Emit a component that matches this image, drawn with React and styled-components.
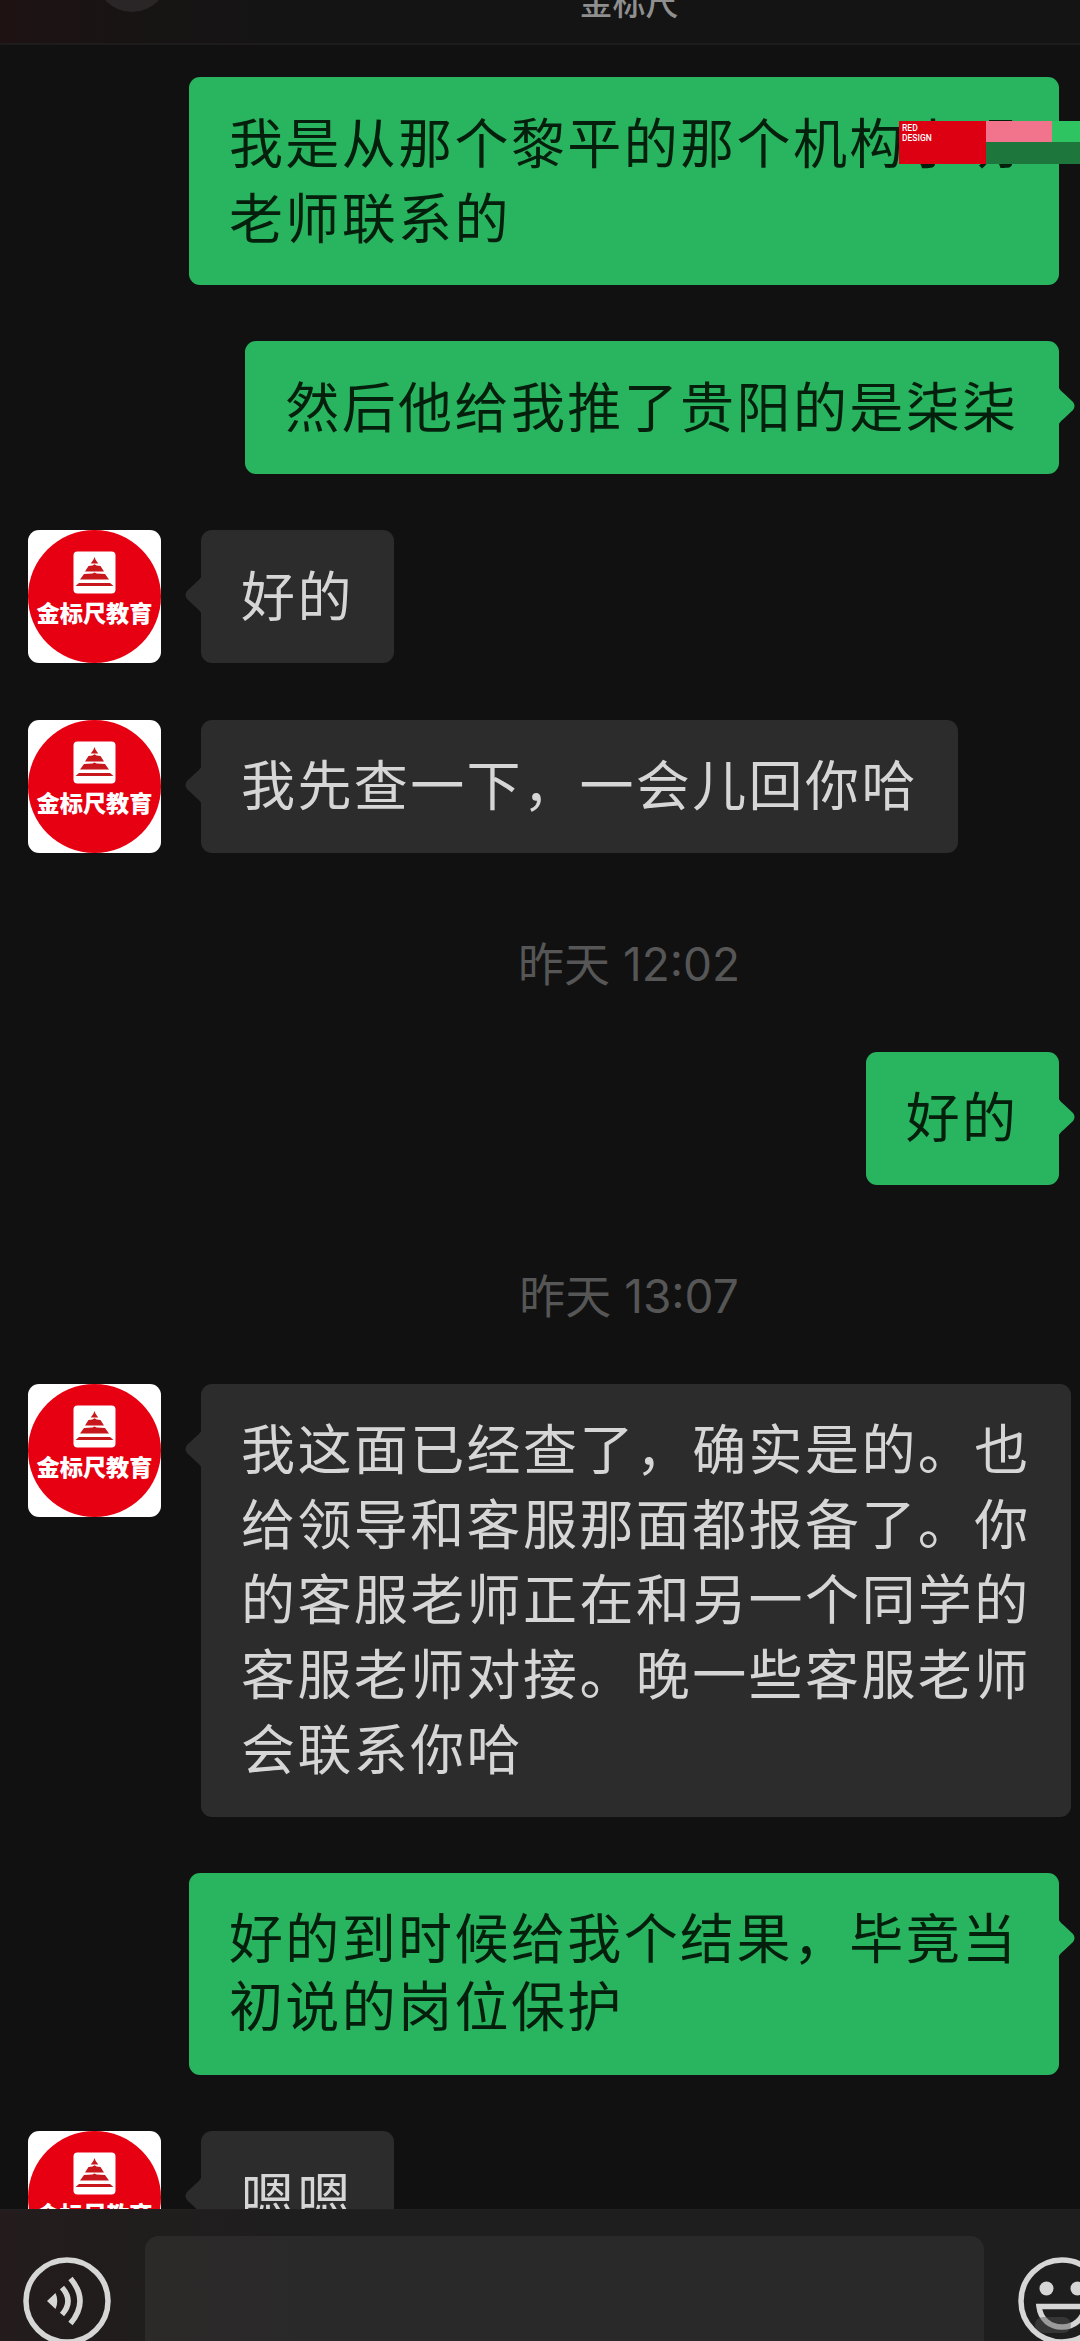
import React from 'react';
import styled, { createGlobalStyle } from 'styled-components';

const GlobalStyle = createGlobalStyle`
    * {
        box-sizing: border-box;
    }

    body {
        margin: 0;
        background: #111111;
    }
`;

const WrapperStyled = styled.div`
    position: relative;
    display: flex;
    flex-direction: column;
    width: 1080px;
    height: 2341px;
    overflow: hidden;
    background: #111111;
    font-family: Inter, 'Noto Sans CJK SC', sans-serif;
`;

const HeaderStyled = styled.header`
    position: relative;
    flex: none;
    display: flex;
    justify-content: center;
    height: 45px;
    padding-left: 178px;
    overflow: hidden;
    border-bottom: 2px solid #1d1b1b;
    background: linear-gradient(90deg, #1e1213 0, #171414 150px, #141414 320px);
`;

const HeaderTitle = styled.h1`
    margin: -18px 0 0;
    color: #8f8f8f;
    font-size: 33px;
    font-weight: 500;
    line-height: 42px;
`;

const HeaderBlob = styled.span`
    position: absolute;
    top: -60px;
    left: 96px;
    width: 72px;
    height: 72px;
    border-radius: 50%;
    background: #2a2526;
`;

const MessageListStyled = styled.main`
    flex: 1;
    min-height: 0;
    display: flex;
    flex-direction: column;
    gap: 56.2px;
    padding: 32px 9px 0 28px;
    overflow: hidden;
`;

const RowStyled = styled.div`
    flex: none;
    display: flex;
    align-items: flex-start;
    justify-content: ${(props) => (props.$mine ? 'flex-end' : 'flex-start')};
    gap: 40px;
    padding-right: ${(props) => (props.$mine ? '12.5px' : '0')};
`;

const BubbleStyled = styled.div`
    position: relative;
    padding: ${(props) => (props.$tight ? '33px 40px' : '29.5px 40px 28.5px')};
    border-radius: 11px;
    background: ${(props) => (props.$mine ? '#29b560' : '#2c2c2c')};
    color: ${(props) => (props.$mine ? '#04200d' : '#d6d6d6')};
    font-size: 54px;
    letter-spacing: 2.4px;
    line-height: ${(props) => (props.$tight ? '68px' : '75px')};
    white-space: nowrap;
`;

const TailStyled = styled.svg`
    position: absolute;
    top: 45px;
    width: 18px;
    height: 40px;
    ${(props) => (props.$mine ? 'right: -17.5px; transform: scaleX(-1);' : 'left: -17px;')}
`;

const AvatarStyled = styled.svg`
    flex: none;
    width: 133px;
    height: 133px;
    border-radius: 11px;
    background: #ffffff;
`;

const TimeStyled = styled.time`
    flex: none;
    display: flex;
    justify-content: center;
    align-items: flex-end;
    height: 86.8px;
    padding: 0 0 2px 159px;
    color: #565656;
    font-size: 46px;
    line-height: 60px;
`;

const FooterStyled = styled.footer`
    flex: none;
    display: flex;
    align-items: flex-start;
    height: 132px;
    padding: 26px 0 0 23px;
    border-top: 1px solid #222020;
    background: linear-gradient(90deg, #241c1c 0, #201d1d 150px, #1e1e1e 340px);
`;

const InputStyled = styled.div`
    flex: none;
    width: 839px;
    height: 140px;
    margin: 0 34px;
    border-radius: 14px;
    background: linear-gradient(90deg, #2c2929 0, #292929 240px);
`;

const FooterIcon = styled.svg`
    flex: none;
    width: 88px;
    height: 88px;
    margin-top: 21px;
`;

const PaletteStyled = styled.aside`
    position: absolute;
    top: 121px;
    right: 0;
    display: grid;
    grid-template-columns: 87px 66px 28px;
    grid-template-rows: 21px 22px;
`;

const PaletteLabel = styled.div`
    grid-row: span 2;
    padding: 3px;
    background: #dc0012;
    color: #ffffff;
    font-family: Roboto, sans-serif;
    font-size: 8.5px;
    font-weight: 500;
    line-height: 9.5px;
`;

const Swatch = styled.div`
    grid-column: span ${(props) => props.$span || 1};
    background: ${(props) => props.$color};
`;

const messages = [
    { id: 1, mine: true, lines: ['我是从那个黎平的那个机构小明', '老师联系的'] },
    { id: 2, mine: true, lines: ['然后他给我推了贵阳的是柒柒'] },
    { id: 3, lines: ['好的'] },
    { id: 4, lines: ['我先查一下，一会儿回你哈'] },
    { id: 5, time: '昨天 12:02' },
    { id: 6, mine: true, lines: ['好的'] },
    { id: 7, time: '昨天 13:07' },
    {
        id: 8,
        lines: [
            '我这面已经查了，确实是的。也',
            '给领导和客服那面都报备了。你',
            '的客服老师正在和另一个同学的',
            '客服老师对接。晚一些客服老师',
            '会联系你哈',
        ],
    },
    { id: 9, mine: true, tight: true, lines: ['好的到时候给我个结果，毕竟当', '初说的岗位保护'] },
    { id: 10, lines: ['嗯嗯'] },
];

function Avatar() {
    return (
        <AvatarStyled viewBox="0 0 133 133">
            <circle cx="66.5" cy="66.5" r="66.5" fill="#e60012" />
            <rect x="45.5" y="21.5" width="42" height="42" rx="4" fill="#fff" />
            <g fill="#c8161d">
                <path d="M66.5 27l1.2 3 2.6 3.5h-7.6l2.6-3.5z" />
                <path d="M60.5 36l4-.6 2-1.2 2 1.2 4 .6 3.5 5.5h-19z" />
                <path d="M56 44l8.5-.5 2-1 2 1 8.5.5 4 5.5H52z" />
                <path d="M51 53h31l3.5 3h-38z" />
            </g>
            <text
                x="66.5"
                y="92"
                fill="#fff"
                fontSize="23.2"
                fontWeight="900"
                textAnchor="middle"
                fontFamily="'Noto Sans CJK SC', sans-serif"
            >
                金标尺教育
            </text>
        </AvatarStyled>
    );
}

function Message({ mine, tight, lines }) {
    return (
        <RowStyled $mine={mine}>
            {!mine && <Avatar />}
            <BubbleStyled $mine={mine} $tight={tight}>
                <TailStyled $mine={mine} viewBox="0 0 18 40">
                    <path
                        d="M18 0C17 3 15 5 12 7.5L3 16Q0 20 3 24l9 8.5C15 35 17 37 18 40z"
                        fill={mine ? '#29b560' : '#2c2c2c'}
                    />
                </TailStyled>
                {lines.map((line) => (
                    <div key={line}>{line}</div>
                ))}
            </BubbleStyled>
        </RowStyled>
    );
}

export default function App() {
    return (
        <WrapperStyled>
            <GlobalStyle />
            <HeaderStyled>
                <HeaderBlob />
                <HeaderTitle>金标尺</HeaderTitle>
            </HeaderStyled>
            <MessageListStyled>
                {messages.map((mes) =>
                    mes.time ? <TimeStyled key={mes.id}>{mes.time}</TimeStyled> : <Message key={mes.id} {...mes} />,
                )}
            </MessageListStyled>
            <FooterStyled>
                <FooterIcon viewBox="0 0 88 88" fill="none" stroke="#d6d6d6">
                    <circle cx="44" cy="44" r="41" strokeWidth="5.5" />
                    <path d="M24 44l8.5-8q3.5 8 0 16z" fill="#d6d6d6" stroke="none" />
                    <path d="M39 30.5q12 13.5 0 27M47.5 21.5q19 22.5 0 45" strokeWidth="5.5" />
                </FooterIcon>
                <InputStyled />
                <FooterIcon viewBox="0 0 88 88" fill="none" stroke="#d6d6d6">
                    <circle cx="44" cy="44" r="41" strokeWidth="5.5" />
                    <g fill="#d6d6d6" stroke="none">
                        <circle cx="28.5" cy="31.5" r="7" />
                        <circle cx="59.5" cy="31.5" r="7" />
                    </g>
                    <path d="M21 49.5h46c-1.5 13-11 20.5-23 20.5s-21.5-7.5-23-20.5z" strokeWidth="5.5" />
                    <rect x="17" y="60" width="36" height="16" rx="8" fill="#555" fillOpacity=".45" stroke="none" />
                </FooterIcon>
            </FooterStyled>
            <PaletteStyled>
                <PaletteLabel>
                    RED
                    <br />
                    DESIGN
                </PaletteLabel>
                <Swatch $color="#f2748c" />
                <Swatch $color="#2fc462" />
                <Swatch $color="#1d763b" $span={2} />
            </PaletteStyled>
        </WrapperStyled>
    );
}
